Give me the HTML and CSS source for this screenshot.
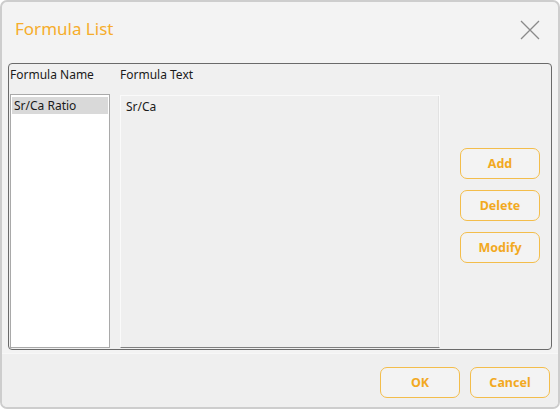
FILE: index.html
```html
<!DOCTYPE html>
<html>
<head>
<meta charset="utf-8">
<link rel="stylesheet" href="styles.css">
</head>
<body>
<div class="dialog">
  <div class="header">
    <div class="title">Formula List</div>
    <svg class="close" width="20" height="20" viewBox="0 0 20 20"><path d="M1 1 L19 19 M19 1 L1 19" stroke="#8a8a8a" stroke-width="1.3" fill="none"/></svg>
  </div>
  <div class="group">
    <div class="lbl lbl-name">Formula Name</div>
    <div class="lbl lbl-text">Formula Text</div>
    <div class="list">
      <div class="item selected">Sr/Ca Ratio</div>
    </div>
    <div class="textbox">Sr/Ca</div>
    <div class="side">
      <button class="btn">Add</button>
      <button class="btn">Delete</button>
      <button class="btn">Modify</button>
    </div>
  </div>
  <div class="footer">
    <button class="btn">OK</button>
    <button class="btn">Cancel</button>
  </div>
</div>
</body>
</html>
```
FILE: styles.css
```css
* { box-sizing: border-box; }
html, body { margin: 0; padding: 0; background: #ffffff; }
body { font-family: "Noto Sans", "Open Sans", sans-serif; font-size: 12px; color: #1a1a1a; }
.dialog {
  width: 560px; height: 409px;
  border: 2px solid #cdcdcd;
  border-radius: 7px;
  background: #f3f3f3;
  display: flex; flex-direction: column;
  overflow: hidden;
}
.header {
  height: 61px;
  display: flex; align-items: flex-start; justify-content: space-between;
  padding: 15px 18px 0 13px;
}
.title { font-size: 17px; color: #f6ad2b; line-height: 24px; }
.close { margin-top: 3px; }
.group {
  margin: 0 6px 0 6px;
  height: 287px;
  border: 1px solid #6a6a6a;
  border-radius: 4px;
  background: #f0f0f0;
  display: grid;
  grid-template-columns: 100px 330px 100px;
  grid-template-rows: 28px 1fr;
  padding: 2px 0 1px 1px;
}
.lbl { line-height: 16px; padding-top: 1px; }
.lbl-text { margin-left: 10px; }
.list {
  grid-column: 1; grid-row: 2;
  background: #ffffff;
  border: 1px solid #a9a9a9;
  padding: 2px 1px;
}
.item { line-height: 17px; padding-left: 2px; }
.item.selected { background: #d9d9d9; }
.textbox {
  grid-column: 2; grid-row: 2;
  margin-left: 10px; margin-top: 1px;
  background: #efefef;
  border: 1px solid #fafafa;
  border-bottom: 1px solid #808080;
  box-shadow: inset -1px 0 0 #e2e2e2;
  padding: 4px 5px;
  line-height: 14px;
}
.side {
  grid-column: 3; grid-row: 1 / span 2;
  margin-left: 20px;
  align-self: center;
  display: flex; flex-direction: column; gap: 11px;
  margin-top: -4px;
}
.btn {
  width: 80px; height: 31px;
  border: 1px solid #f3bd4b;
  border-radius: 7px;
  background: #f3f3f3;
  color: #f2a91f;
  font-family: "Noto Sans", "Open Sans", sans-serif;
  font-weight: bold;
  font-size: 12.5px;
  padding: 0;
}
.footer {
  flex: 1;
  margin-top: 3px;
  background: #efefef;
  border-top: 1px solid #f7f7f7;
  display: flex; justify-content: flex-end; align-items: flex-start;
  gap: 10px;
  padding: 13px 8px 0 0;
}
```
